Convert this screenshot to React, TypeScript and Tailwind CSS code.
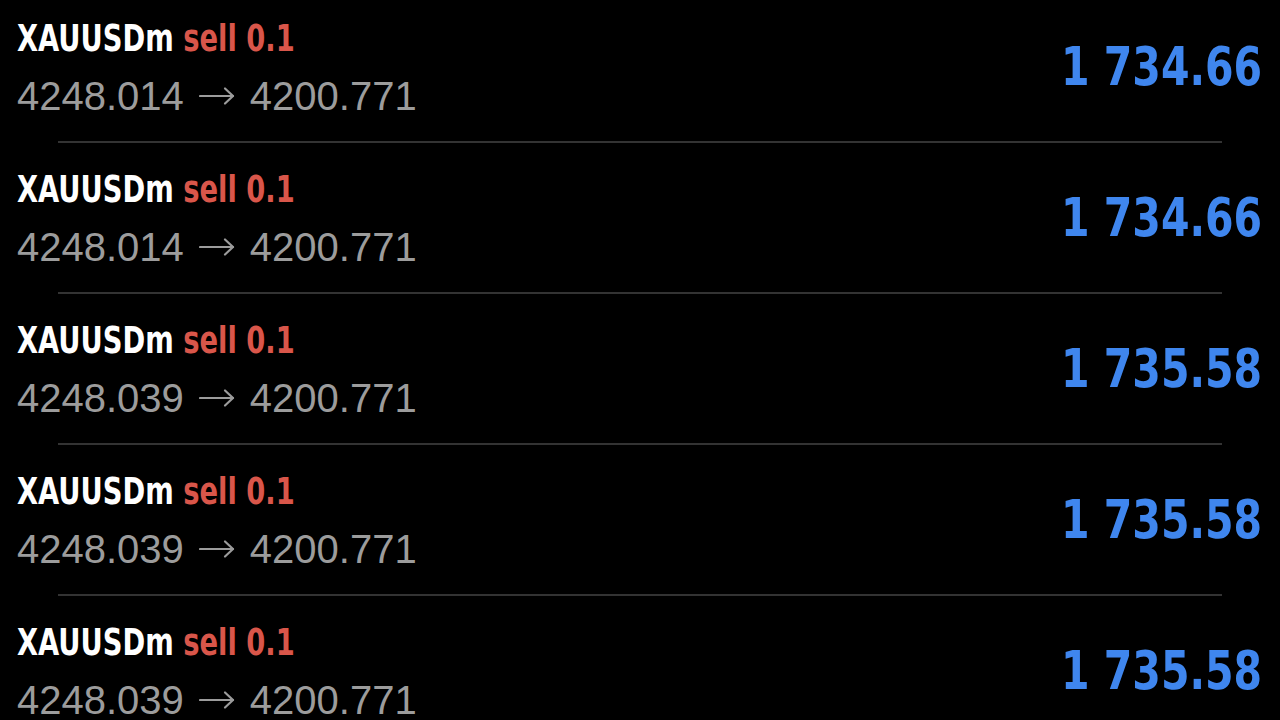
const trades = [
  { symbol: 'XAUUSDm', side: 'sell', volume: '0.1', open: '4248.014', close: '4200.771', profit: '1 734.66' },
  { symbol: 'XAUUSDm', side: 'sell', volume: '0.1', open: '4248.014', close: '4200.771', profit: '1 734.66' },
  { symbol: 'XAUUSDm', side: 'sell', volume: '0.1', open: '4248.039', close: '4200.771', profit: '1 735.58' },
  { symbol: 'XAUUSDm', side: 'sell', volume: '0.1', open: '4248.039', close: '4200.771', profit: '1 735.58' },
  { symbol: 'XAUUSDm', side: 'sell', volume: '0.1', open: '4248.039', close: '4200.771', profit: '1 735.58' },
];

const Arrow = () => (
  <svg width="36" height="20" viewBox="0 0 36 20" fill="none" stroke="#9c9c9c" strokeWidth="2.2" strokeLinecap="round" strokeLinejoin="round">
    <path d="M1 10H34" />
    <path d="M26 2.5L34 10L26 17.5" />
  </svg>
);

const App = () => {
  return (
    <div className="w-[1280px] h-[720px] overflow-hidden bg-black">
      <div className="-mt-[8px]">
        {trades.map((t, i) => (
          <div key={i}>
            <div className="flex items-center justify-between pl-[17px] pr-[18px] h-[149px]">
              <div className="flex flex-col">
                <div className="text-[38px] leading-[40px] font-bold font-stretch-condensed font-['DejaVu_Sans_Condensed','DejaVu_Sans',sans-serif] whitespace-nowrap">
                  <span className="inline-block origin-left [transform:scaleX(0.8)]">
                    <span className="text-white">{t.symbol}</span>{' '}
                    <span className="text-[#d9564a]">{t.side} {t.volume}</span>
                  </span>
                </div>
                <div className="mt-[18px] flex items-center gap-[15px] text-[40px] leading-[40px] text-[#9c9c9c] font-['Liberation_Sans',sans-serif]">
                  <span>{t.open}</span>
                  <Arrow />
                  <span>{t.close}</span>
                </div>
              </div>
              <div className="text-[54px] leading-none font-bold font-stretch-condensed text-[#3f86ee] font-['DejaVu_Sans_Condensed','DejaVu_Sans',sans-serif] whitespace-nowrap">
                <span className="inline-block origin-right [transform:scaleX(0.845)]">{t.profit}</span>
              </div>
            </div>
            <div className="mx-[58px] h-[2px] bg-[#333333]" />
          </div>
        ))}
      </div>
    </div>
  );
};

export default App;
